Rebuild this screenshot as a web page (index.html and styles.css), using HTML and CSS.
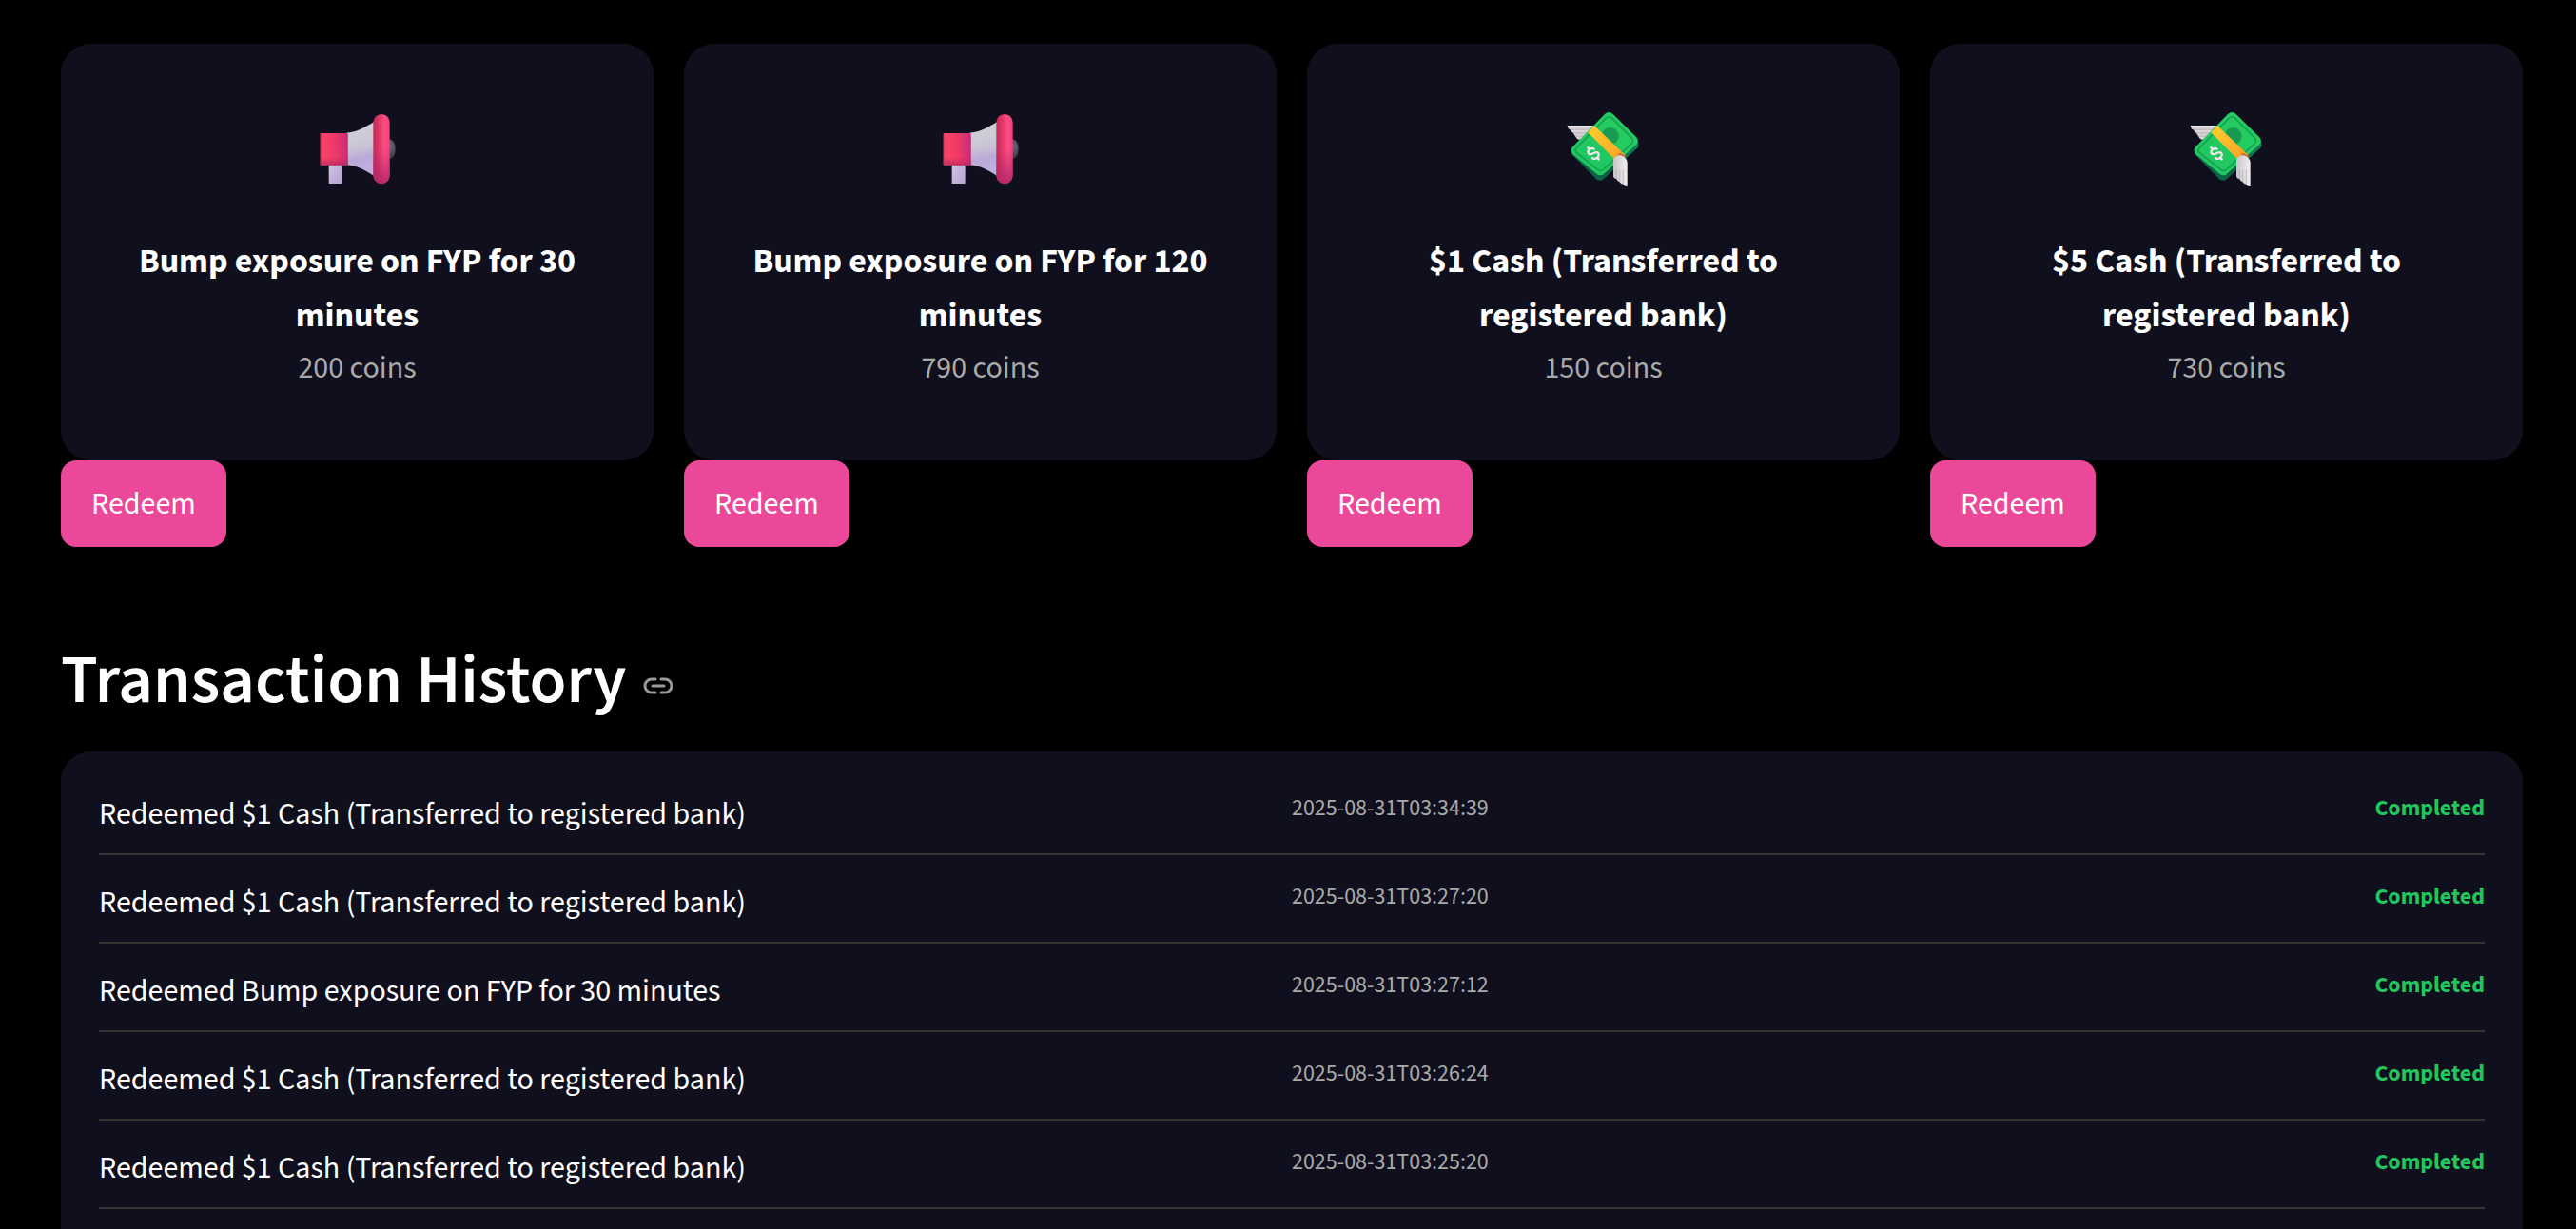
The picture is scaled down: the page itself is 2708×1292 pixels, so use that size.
FILE: index.html
```html
<!DOCTYPE html>
<html lang="en">
<head>
<meta charset="utf-8">
<meta name="viewport" content="width=device-width, initial-scale=1">
<title>Rewards</title>
<link rel="stylesheet" href="styles.css">
</head>
<body>
<svg class="defs" aria-hidden="true">
  <defs>
    <linearGradient id="m-box" x1="0" x2="1" y1="0.4" y2="0.3"><stop offset="0" stop-color="#fb4668"/><stop offset="0.5" stop-color="#ee3a66"/><stop offset="1" stop-color="#cb2b7c"/></linearGradient>
    <linearGradient id="m-shade" x1="0" x2="0" y1="0" y2="1"><stop offset="0.75" stop-color="#b32960" stop-opacity="0"/><stop offset="1" stop-color="#b32960" stop-opacity="0.75"/></linearGradient>
    <linearGradient id="m-cone" x1="0" x2="0.1" y1="0" y2="1"><stop offset="0.1" stop-color="#d2cfd8"/><stop offset="0.5" stop-color="#cac5d4"/><stop offset="0.72" stop-color="#b9a9d8"/><stop offset="1" stop-color="#c3b0e2"/></linearGradient>
    <linearGradient id="m-leg" x1="0" x2="1" y1="0" y2="1"><stop offset="0" stop-color="#d8cde0"/><stop offset="0.4" stop-color="#c5b6dc"/><stop offset="1" stop-color="#b7a4d6"/></linearGradient>
    <linearGradient id="m-rim" x1="0" x2="1" y1="0" y2="0"><stop offset="0" stop-color="#bd2c55"/><stop offset="0.3" stop-color="#dc3566"/><stop offset="0.7" stop-color="#ff4c84"/><stop offset="1" stop-color="#f04378"/></linearGradient>
    <linearGradient id="m-rim-shade" x1="0" x2="0" y1="0" y2="1"><stop offset="0.5" stop-color="#b0246a" stop-opacity="0"/><stop offset="1" stop-color="#b0246a" stop-opacity="0.85"/></linearGradient>
    <radialGradient id="m-knob" cx="0.6" cy="0.35" r="0.6"><stop offset="0" stop-color="#6c6577"/><stop offset="1" stop-color="#403c4b"/></radialGradient>
    <linearGradient id="c-side" x1="0" x2="1" y1="1" y2="0"><stop offset="0" stop-color="#0d6a48"/><stop offset="0.5" stop-color="#0c5c43"/><stop offset="1" stop-color="#168a57"/></linearGradient>
    <linearGradient id="c-face" x1="0" x2="1" y1="1" y2="0"><stop offset="0" stop-color="#1fc45f"/><stop offset="1" stop-color="#25cf62"/></linearGradient>
    <linearGradient id="c-band" x1="0" x2="1" y1="0" y2="1"><stop offset="0" stop-color="#ffd02c"/><stop offset="0.8" stop-color="#fda928"/><stop offset="1" stop-color="#e0842a"/></linearGradient>
    <linearGradient id="c-wing" x1="0" x2="0" y1="0" y2="1"><stop offset="0" stop-color="#f3f1f2"/><stop offset="1" stop-color="#bfb8be"/></linearGradient>
    <linearGradient id="c-wing2" x1="0" x2="1" y1="0" y2="0"><stop offset="0" stop-color="#c9c2c6"/><stop offset="0.5" stop-color="#dfdbdd"/><stop offset="1" stop-color="#f1eff0"/></linearGradient>
  </defs>
  <symbol id="megaphone" viewBox="52 24 288 288">
    <ellipse cx="296" cy="170" rx="19" ry="31" fill="url(#m-knob)"/>
    <path d="M105 214H147V279H105Z" fill="url(#m-leg)"/>
    <path d="M160 119C190 118 218 102 248 84V256C220 236 192 222 160 220Z" fill="url(#m-cone)"/>
    <rect x="78" y="120" width="87" height="101" rx="4" fill="url(#m-box)"/>
    <rect x="78" y="120" width="87" height="101" rx="4" fill="url(#m-shade)"/>
    <path d="M80 122V219M163 122V219" stroke="#a83159" stroke-width="3" opacity="0.5"/>
    <rect x="245" y="60" width="52" height="219" rx="26" fill="url(#m-rim)"/>
    <rect x="245" y="60" width="52" height="219" rx="26" fill="url(#m-rim-shade)"/>
  </symbol>
  <symbol id="cash" viewBox="52 24 288 288">
    <path d="M122 126H150V141H122Q108 141 106 126Z" fill="url(#c-wing)"/>
    <path d="M116 116H150V132H116Q102 132 100 116Z" fill="url(#c-wing)"/>
    <path d="M108 106H150V122H108Q94 122 91 106Z" fill="url(#c-wing)"/>
    <path d="M81 96H164L150 111H98Q82 111 81 96Z" fill="url(#c-wing)"/>
    <path d="M94 174L198 250L300 140Q308 151 304 164L196 264Q186 273 174 266L98 190Q92 183 94 174Z" fill="url(#c-side)"/>
    <path d="M199 60Q212 48 225 60L298 132Q309 144 298 156L197 248Q185 258 173 248L98 187Q87 175 98 163Z" fill="url(#c-face)"/>
    <path d="M203 72Q212 64 221 72L284 135Q292 144 284 152L194 235Q185 242 177 235L109 181Q102 174 109 167Z" fill="none" stroke="#16984f" stroke-width="4"/>
    <ellipse cx="216" cy="129" rx="27" ry="27" fill="#199a52"/>
    <path d="M166 96L264 190L246 200H228L146 118Z" fill="url(#c-band)"/>
    <path d="M228 200L246 182L266 193L246 212Z" fill="#c5722f"/>
    <path transform="translate(163 184) rotate(-43)" d="M11 -9C8 -21 -11 -20 -11 -9C-11 2 12 -3 12 9C12 21 -10 21 -12 8M0 -25V-18M0 18V25" fill="none" stroke="#eeeaec" stroke-width="7" stroke-linecap="round"/>
    <path d="M226 202Q238 184 256 193Q269 200 270 212V288Q260 289 257 281Q248 280 246 274Q238 272 236 264Q226 263 226 254Z" fill="url(#c-wing2)"/>
    <path d="M236 236V264M246 238V274M257 236V281" stroke="#9d949b" stroke-width="3" opacity="0.5"/>
  </symbol>
</svg>
<main class="page">
  <section class="rewards" aria-label="Rewards">
    <article class="reward">
      <div class="card">
        <svg class="card-icon" aria-hidden="true"><use href="#megaphone"/></svg>
        <h3 class="card-title">Bump exposure on FYP for 30 minutes</h3>
        <p class="card-price">200 coins</p>
      </div>
      <button class="redeem" type="button">Redeem</button>
    </article>
    <article class="reward">
      <div class="card">
        <svg class="card-icon" aria-hidden="true"><use href="#megaphone"/></svg>
        <h3 class="card-title">Bump exposure on FYP for 120 minutes</h3>
        <p class="card-price">790 coins</p>
      </div>
      <button class="redeem" type="button">Redeem</button>
    </article>
    <article class="reward">
      <div class="card">
        <svg class="card-icon" aria-hidden="true"><use href="#cash"/></svg>
        <h3 class="card-title">$1 Cash (Transferred to registered bank)</h3>
        <p class="card-price">150 coins</p>
      </div>
      <button class="redeem" type="button">Redeem</button>
    </article>
    <article class="reward">
      <div class="card">
        <svg class="card-icon" aria-hidden="true"><use href="#cash"/></svg>
        <h3 class="card-title">$5 Cash (Transferred to registered bank)</h3>
        <p class="card-price">730 coins</p>
      </div>
      <button class="redeem" type="button">Redeem</button>
    </article>
  </section>

  <header class="section-head" id="transaction-history">
    <h2 class="section-title">Transaction History</h2>
    <a class="anchor" href="#transaction-history">
      <svg class="anchor-icon" viewBox="0 0 32 18" fill="none" stroke="currentColor" stroke-width="3" stroke-linecap="round" aria-hidden="true"><path d="M13 2H9A7 7 0 0 0 9 16H13M19 2H23A7 7 0 0 1 23 16H19M10 9H22"/></svg>
    </a>
  </header>

  <section class="history">
    <table class="transactions">
      <tbody>
        <tr><td class="what">Redeemed $1 Cash (Transferred to registered bank)</td><td class="when">2025-08-31T03:34:39</td><td class="status">Completed</td></tr>
        <tr><td class="what">Redeemed $1 Cash (Transferred to registered bank)</td><td class="when">2025-08-31T03:27:20</td><td class="status">Completed</td></tr>
        <tr><td class="what">Redeemed Bump exposure on FYP for 30 minutes</td><td class="when">2025-08-31T03:27:12</td><td class="status">Completed</td></tr>
        <tr><td class="what">Redeemed $1 Cash (Transferred to registered bank)</td><td class="when">2025-08-31T03:26:24</td><td class="status">Completed</td></tr>
        <tr><td class="what">Redeemed $1 Cash (Transferred to registered bank)</td><td class="when">2025-08-31T03:25:20</td><td class="status">Completed</td></tr>
      </tbody>
    </table>
  </section>
</main>
</body>
</html>
```
FILE: styles.css
```css
* {
  box-sizing: border-box;
}

body {
  margin: 0;
  background: #000;
  color: #fff;
  font-family: "Source Sans 3", "Source Sans Pro", "Noto Sans CJK SC", sans-serif;
  font-size: 32px;
  line-height: 51px;
}

.defs {
  position: absolute;
  width: 0;
  height: 0;
}

.page {
  display: flex;
  flex-direction: column;
  min-height: 100vh;
  padding: 46px 56px 0 64px;
}

.rewards {
  display: grid;
  grid-template-columns: repeat(4, 1fr);
  gap: 32px;
}

.reward {
  display: flex;
  flex-direction: column;
  align-items: flex-start;
}

.card {
  display: flex;
  flex-direction: column;
  align-items: center;
  align-self: stretch;
  flex: 1;
  padding: 62px 64px 71px;
  border-radius: 32px;
  background: #100f1d;
  text-align: center;
}

.card-icon {
  width: 96px;
  height: 96px;
}

.card-title {
  margin: 42px 0 2px;
  font-size: 36px;
  font-weight: 700;
  line-height: 57px;
}

.card-price {
  margin: 0;
  color: #aaa;
}

.redeem {
  padding: 21px 32px 19px;
  border: 0;
  border-radius: 16px;
  background: #ec4899;
  color: #fff;
  font: inherit;
  cursor: pointer;
}

.section-head {
  display: flex;
  align-items: center;
  gap: 18px;
  margin: 98px 0 31px;
}

.section-title {
  margin: 0;
  font-size: 71px;
  font-weight: 600;
  line-height: 86px;
}

.anchor {
  display: flex;
  padding-top: 10px;
  color: #999;
}

.anchor-icon {
  width: 32px;
  height: 18px;
}

.history {
  flex: 1;
  padding: 16px 40px 0;
  border-radius: 32px 32px 0 0;
  background: #100f1d;
}

.transactions {
  width: 100%;
  table-layout: fixed;
  border-spacing: 0;
}

.transactions td {
  padding: 25px 0 15px;
  border-bottom: 2px solid #333;
  vertical-align: top;
}

.transactions .what {
  width: 50%;
}

.transactions .when,
.transactions .status {
  font-size: 24px;
  line-height: 38px;
}

.transactions .when {
  color: #aaa;
}

.transactions .status {
  color: #22c55e;
  font-weight: 700;
  text-align: right;
}
```
